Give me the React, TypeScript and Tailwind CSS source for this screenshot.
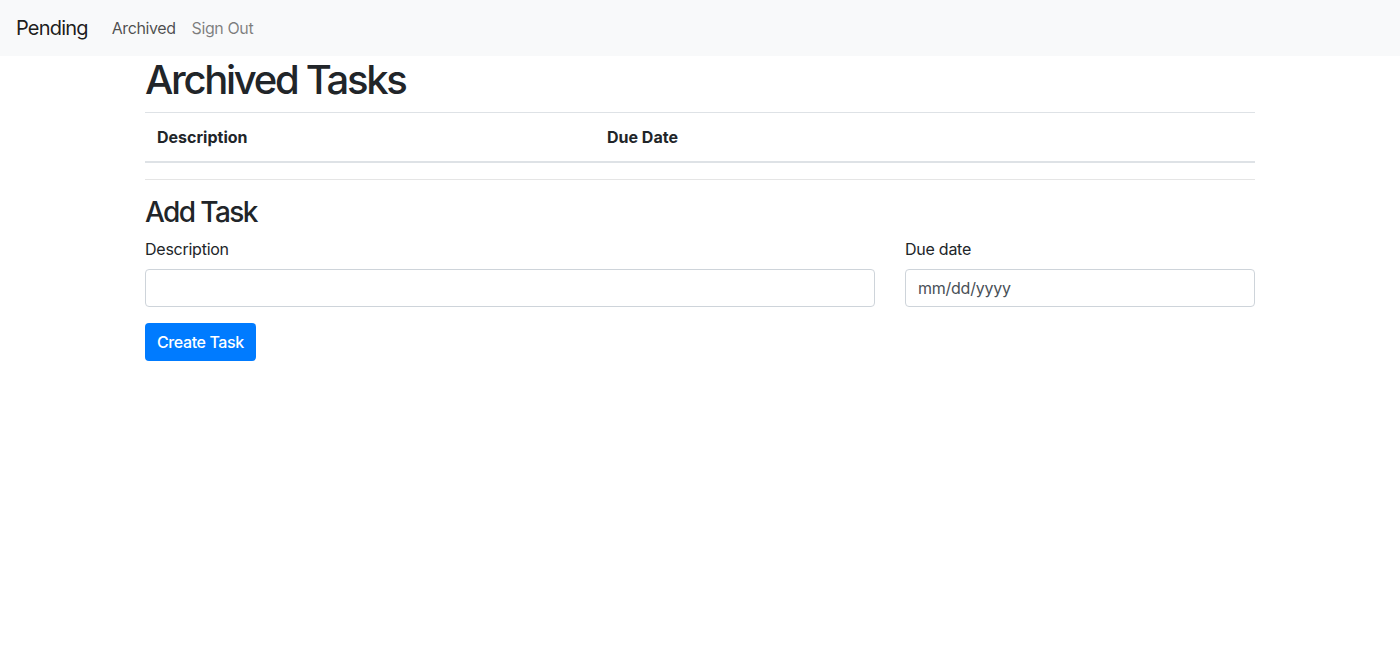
export default function App() {
  const navLinks = [
    { name: "Archived", active: true },
    { name: "Sign Out", active: false },
  ];

  return (
    <div className="min-h-screen bg-white text-[#212529] font-['Inter','Liberation_Sans',sans-serif] text-base leading-6 tracking-[-0.25px]">
      {/* navbar */}
      <nav className="flex items-center h-14 px-4 py-2 bg-[#f8f9fa]">
        <a className="mr-4 py-[5px] text-xl leading-[30px] tracking-[-0.8px] text-black/90">Pending</a>
        <ul className="flex items-center">
          {navLinks.map((link) => (
            <li key={link.name}>
              <a
                className={`block px-2 py-2 tracking-[-0.4px] ${
                  link.active ? "text-black/70" : "text-black/50"
                }`}
              >
                {link.name}
              </a>
            </li>
          ))}
        </ul>
      </nav>

      {/* main container */}
      <div className="w-[1140px] mx-auto px-[15px]">
        <h1 className="text-[40px] leading-[48px] font-medium mb-2 tracking-[-2.3px]">
          Archived Tasks
        </h1>

        <table className="w-full mb-4 border-collapse">
          <thead>
            <tr>
              <th className="w-[450px] p-3 text-left font-bold tracking-normal border-t border-b-2 border-[#dee2e6]">
                Description
              </th>
              <th className="p-3 text-left font-bold tracking-normal border-t border-b-2 border-[#dee2e6]">
                Due Date
              </th>
            </tr>
          </thead>
          <tbody></tbody>
        </table>

        <hr className="my-4 border-0 border-t border-black/10" />

        <h3 className="text-[28px] leading-[33px] font-medium mb-2 tracking-[-1.6px]">Add Task</h3>

        <form className="flex gap-[30px]">
          <div className="w-[730px] mb-4">
            <label className="block mb-2">Description</label>
            <input
              type="text"
              className="block w-full h-[38px] px-3 py-1.5 border border-[#ced4da] rounded text-[#495057] outline-none"
            />
          </div>
          <div className="flex-1 mb-4">
            <label className="block mb-2">Due date</label>
            <input
              type="text"
              readOnly
              defaultValue="mm/dd/yyyy"
              className="block w-full h-[38px] px-3 py-1.5 border border-[#ced4da] rounded text-[#495057] tracking-[-0.25px] outline-none"
            />
          </div>
        </form>

        <button className="h-[38px] px-3 py-1.5 rounded bg-[#007bff] text-white font-medium tracking-[-0.4px]">
          Create Task
        </button>
      </div>
    </div>
  );
}
